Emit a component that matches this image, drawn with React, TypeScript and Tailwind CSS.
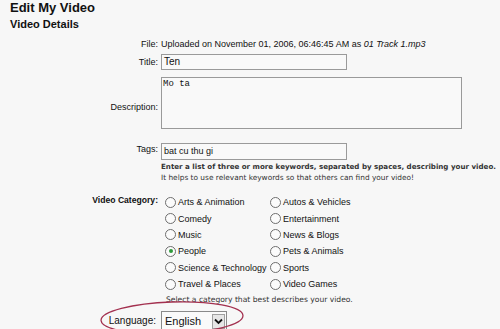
import React from "react";

const cats: [string, string][] = [
  ["Arts & Animation", "Autos & Vehicles"],
  ["Comedy", "Entertainment"],
  ["Music", "News & Blogs"],
  ["People", "Pets & Animals"],
  ["Science & Technology", "Sports"],
  ["Travel & Places", "Video Games"],
];

function Radio({ label, checked }: { label: string; checked?: boolean }) {
  return (
    <div className="flex items-center h-[16.4px]">
      <span className="w-[11px] h-[11px] rounded-full border border-[#6e6e6e] bg-[#fbfbfb] flex items-center justify-center mr-[2px]">
        {checked && <span className="w-[4px] h-[4px] rounded-full bg-[#2e9a3a]" />}
      </span>
      <span>{label}</span>
    </div>
  );
}

export default function App() {
  return (
    <div
      className="relative w-[500px] h-[329px] overflow-hidden bg-[#f7f7f7] text-[#111] text-[9px] leading-[12px]"
      style={{ fontFamily: '"Liberation Sans", Arial, sans-serif' }}
    >
      <div className="pl-[10px] pt-[0px]">
        <div className="text-[13px] font-bold leading-[16px]">Edit My Video</div>
        <div className="text-[11px] font-bold leading-[14px] mt-[1px]">Video Details</div>
      </div>

      <div className="grid grid-cols-[158px_1fr] gap-x-[3px] mt-[7px]">
        <div className="text-right">File:</div>
        <div>
          Uploaded on November 01, 2006, 06:46:45 AM as <i>01 Track 1.mp3</i>
        </div>

        <div className="text-right mt-[4px] self-center">Title:</div>
        <div className="mt-[4px]">
          <div className="w-[186px] h-[16px] border border-[#9a9a9a] bg-[#f9f9f9] text-[10px] leading-[14px] pl-[2px]">
            Ten
          </div>
        </div>

        <div className="text-right mt-[7px] self-center pt-[7px]">Description:</div>
        <div className="mt-[7px]">
          <div
            className="w-[301px] h-[52px] border border-[#9a9a9a] bg-[#f9f9f9] text-[9px] leading-[11px] pl-[1px] pt-[1px]"
            style={{ fontFamily: '"Liberation Mono", "Courier New", monospace' }}
          >
            Mo ta
          </div>
        </div>

        <div className="text-right mt-[14px] leading-[12px]">Tags:</div>
        <div className="mt-[14px]">
          <div className="w-[186px] h-[17px] border border-[#9a9a9a] bg-[#f9f9f9] text-[9px] leading-[15px] pl-[2px]">
            bat cu thu gi
          </div>
          <div
            className="mt-[1px] text-[7.1px] leading-[12px] text-[#333] whitespace-nowrap"
            style={{ fontFamily: '"DejaVu Sans", Verdana, sans-serif', fontWeight: 700 }}
          >
            Enter a list of three or more keywords, separated by spaces, describing your video.
          </div>
          <div
            className="text-[7.4px] leading-[10px] text-[#333] whitespace-nowrap"
            style={{ fontFamily: '"DejaVu Sans", Verdana, sans-serif' }}
          >
            It helps to use relevant keywords so that others can find your video!
          </div>
        </div>

        <div className="text-right mt-[11px] font-bold text-[8.6px]">Video Category:</div>
        <div className="mt-[11px] pl-[4px]">
          <div className="grid grid-cols-[105px_1fr]">
            {cats.map(([a, b]) => (
              <React.Fragment key={a}>
                <Radio label={a} checked={a === "People"} />
                <Radio label={b} />
              </React.Fragment>
            ))}
          </div>
          <div
            className="text-[7.6px] leading-[12px] text-[#333] mt-[2px] pl-[1px] whitespace-nowrap"
            style={{ fontFamily: '"DejaVu Sans", Verdana, sans-serif' }}
          >
            Select a category that best describes your video.
          </div>
        </div>

        <div className="text-right mt-[7px] text-[10px] pt-[2px] pr-[2px]">Language:</div>
        <div className="mt-[5px]">
          <div className="w-[66px] h-[20px] border border-[#8a8a8a] bg-[#fafafa] flex items-center">
            <span className="flex-1 pl-[3px] text-[11px]">English</span>
            <span className="w-[13px] h-[15px] border border-[#a0a0a0] bg-[#e6e6e6] mr-[1px] flex items-center justify-center">
              <svg width="9" height="7" viewBox="0 0 9 7">
                <path d="M1 1.5 L4.5 5 L8 1.5" stroke="#111" strokeWidth="1.8" fill="none" />
              </svg>
            </span>
          </div>
        </div>
      </div>

      <svg className="absolute left-[99px] top-[298px]" width="150" height="40" viewBox="0 0 150 40">
        <ellipse cx="73" cy="20" rx="71" ry="16" fill="none" stroke="#a3304f" strokeWidth="1.3" transform="rotate(-2 73 20)" />
      </svg>
    </div>
  );
}
